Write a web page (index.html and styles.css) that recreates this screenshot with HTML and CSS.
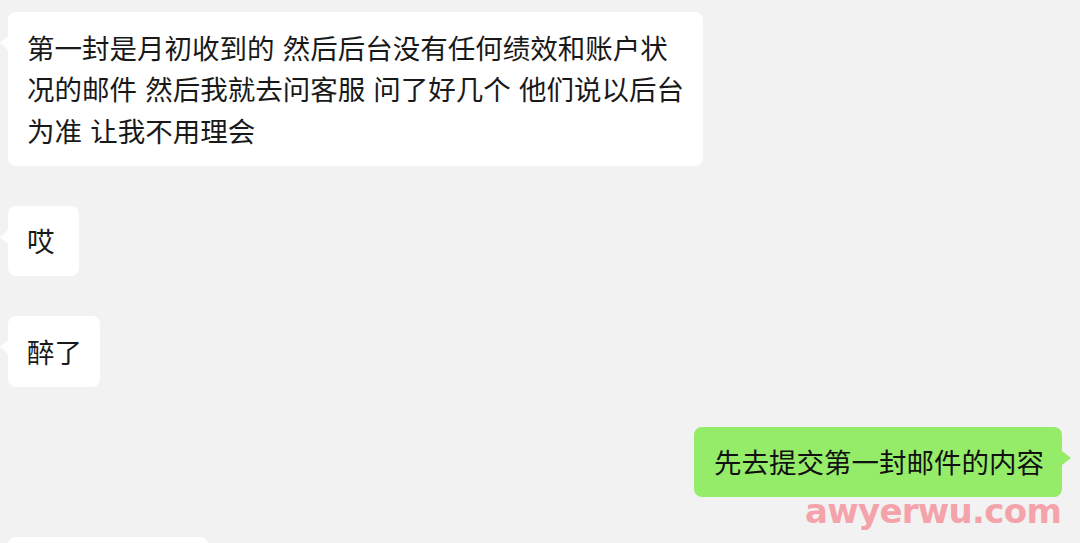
FILE: index.html
```html
<!DOCTYPE html>
<html lang="zh-CN">
<head>
<meta charset="utf-8">
<title>聊天记录</title>
<link rel="stylesheet" href="styles.css">
</head>
<body>
<div class="chat">
  <div class="bubble left wide">第一封是月初收到的 然后后台没有任何绩效和账户状况的邮件 然后我就去问客服 问了好几个 他们说以后台为准 让我不用理会</div>
  <div class="bubble left">哎</div>
  <div class="bubble left">醉了</div>
  <div class="bubble right">先去提交第一封邮件的内容</div>
  <div class="bubble left partial"></div>
</div>
<div class="watermark">awyerwu.com</div>
</body>
</html>
```
FILE: styles.css
```css
html, body {
  margin: 0;
  padding: 0;
  background: #f2f2f2;
  width: 1080px;
  height: 543px;
  overflow: hidden;
}
body {
  position: relative;
  font-family: "Noto Sans CJK SC", "Noto Sans", sans-serif;
  color: #191919;
}
.chat {
  display: flex;
  flex-direction: column;
  align-items: flex-start;
  gap: 40px;
  padding: 12px 18px 0 8px;
}
.bubble {
  position: relative;
  box-sizing: border-box;
  min-width: 71px;
  max-width: 695px;
  padding: 14.5px 18px 14.5px 19px;
  background: #ffffff;
  border-radius: 8px;
  font-size: 27.5px;
  line-height: 41.5px;
  word-spacing: 2px;
}
.bubble::before {
  content: "";
  position: absolute;
  top: 24px;
  width: 0;
  height: 0;
  border-top: 7px solid transparent;
  border-bottom: 7px solid transparent;
}
.bubble.left::before {
  left: -8px;
  border-right: 8px solid #ffffff;
}
.bubble.right {
  align-self: flex-end;
  background: #95ec69;
  color: #111111;
  padding-left: 20px;
}
.bubble.right::before {
  right: -9px;
  border-left: 9px solid #95ec69;
}
.bubble.partial {
  width: 200px;
  height: 70px;
}
.watermark {
  position: absolute;
  left: 805px;
  top: 494px;
  font-family: "DejaVu Sans", sans-serif;
  font-weight: bold;
  font-size: 34px;
  line-height: 1;
  color: #f5a3ab;
  letter-spacing: -0.7px;
}
```
